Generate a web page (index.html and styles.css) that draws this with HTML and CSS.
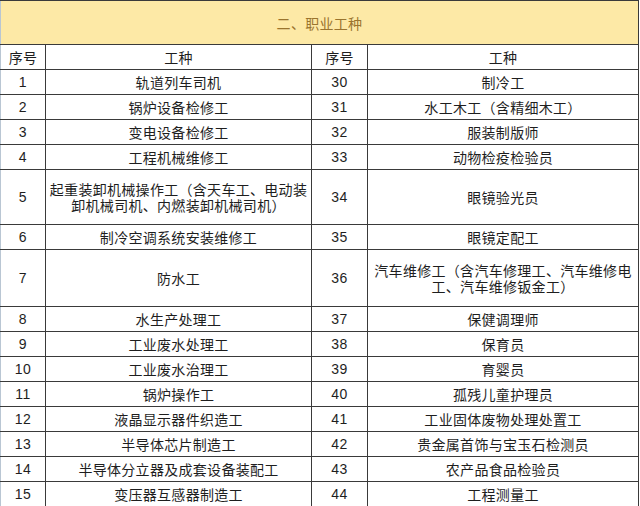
FILE: index.html
```html
<!DOCTYPE html>
<html lang="zh">
<head>
<meta charset="utf-8">
<link rel="stylesheet" href="styles.css">
</head>
<body>
<table class="jobs">
  <colgroup>
    <col class="c-no"><col class="c-name"><col class="c-no2"><col class="c-name2">
  </colgroup>
  <tr class="title"><td colspan="4">二、职业工种</td></tr>
  <tr class="head"><td>序号</td><td>工种</td><td>序号</td><td>工种</td></tr>
  <tr class="r"><td class="n">1</td><td>轨道列车司机</td><td class="n">30</td><td>制冷工</td></tr>
  <tr class="r"><td class="n">2</td><td>锅炉设备检修工</td><td class="n">31</td><td>水工木工（含精细木工）</td></tr>
  <tr class="r"><td class="n">3</td><td>变电设备检修工</td><td class="n">32</td><td>服装制版师</td></tr>
  <tr class="r"><td class="n">4</td><td>工程机械维修工</td><td class="n">33</td><td>动物检疫检验员</td></tr>
  <tr class="r2"><td class="n">5</td><td>起重装卸机械操作工（含天车工、电动装卸机械司机、内燃装卸机械司机）</td><td class="n">34</td><td>眼镜验光员</td></tr>
  <tr class="r"><td class="n">6</td><td>制冷空调系统安装维修工</td><td class="n">35</td><td>眼镜定配工</td></tr>
  <tr class="r3"><td class="n">7</td><td>防水工</td><td class="n">36</td><td>汽车维修工（含汽车修理工、汽车维修电工、汽车维修钣金工）</td></tr>
  <tr class="r"><td class="n">8</td><td>水生产处理工</td><td class="n">37</td><td>保健调理师</td></tr>
  <tr class="r"><td class="n">9</td><td>工业废水处理工</td><td class="n">38</td><td>保育员</td></tr>
  <tr class="r"><td class="n">10</td><td>工业废水治理工</td><td class="n">39</td><td>育婴员</td></tr>
  <tr class="r"><td class="n">11</td><td>锅炉操作工</td><td class="n">40</td><td>孤残儿童护理员</td></tr>
  <tr class="r"><td class="n">12</td><td>液晶显示器件织造工</td><td class="n">41</td><td>工业固体废物处理处置工</td></tr>
  <tr class="r"><td class="n">13</td><td>半导体芯片制造工</td><td class="n">42</td><td>贵金属首饰与宝玉石检测员</td></tr>
  <tr class="r"><td class="n">14</td><td>半导体分立器及成套设备装配工</td><td class="n">43</td><td>农产品食品检验员</td></tr>
  <tr class="r"><td class="n">15</td><td>变压器互感器制造工</td><td class="n">44</td><td>工程测量工</td></tr>
</table>
</body>
</html>
```

FILE: styles.css
```css
html, body {
  margin: 0;
  padding: 0;
  background: #ffffff;
}

.jobs {
  border-collapse: collapse;
  table-layout: fixed;
  width: 638px;
  font-family: "Noto Sans CJK SC", "Liberation Sans", sans-serif;
  font-size: 14px;
  color: #1e1e1e;
  border-left: 1px solid #b9c6d3;
}

.c-no { width: 45px; }
.c-name { width: 266px; }
.c-no2 { width: 56px; }
.c-name2 { width: 271px; }

.jobs td {
  border: 1px solid #3a3a3a;
  padding: 0 2px;
  text-align: center;
  vertical-align: middle;
  line-height: 16px;
  letter-spacing: 0.3px;
  overflow: hidden;
}

.jobs tr > td:first-child {
  border-left: 1px solid #b9c6d3;
}

.title td {
  height: 43px;
  background: #fde9a6;
  color: #9a742e;
  font-size: 14px;
  padding-top: 0;
}

.head td {
  height: 24px;
}

.r td {
  height: 24px;
}

.r2 td {
  height: 54px;
}

.r3 td {
  height: 56px;
}

.jobs td.n {
  font-family: "Liberation Sans", "DejaVu Sans", sans-serif;
  letter-spacing: 0.5px;
}
```
